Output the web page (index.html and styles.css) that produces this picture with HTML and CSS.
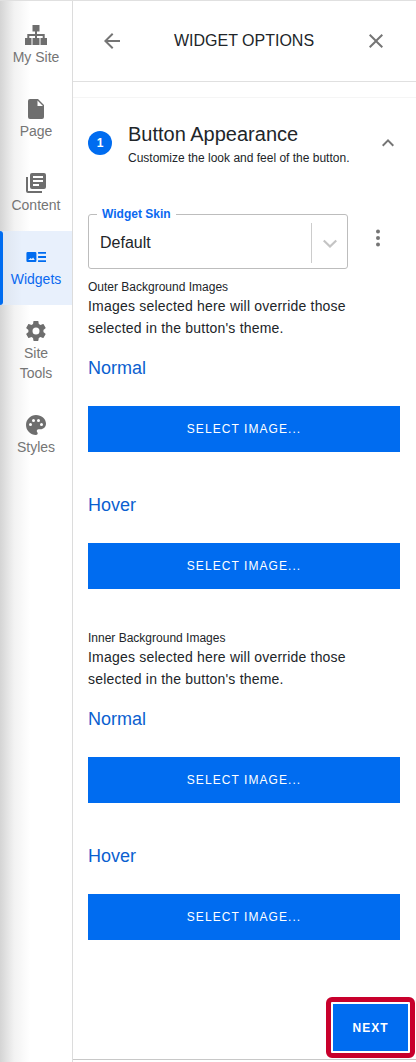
FILE: index.html
```html
<!DOCTYPE html>
<html lang="en">
<head>
<meta charset="utf-8">
<title>Widget Options</title>
<link rel="stylesheet" href="styles.css">
</head>
<body>
<div class="app">
  <nav class="rail">
    <div class="rail-item">
      <svg class="rail-icon" viewBox="0 0 24 24"><path d="M8.500 2h7v6.500H13V11h7.700v4H23v7h-6.500v-7h2.200v-2H13v2h2.500v7h-7v-7H11v-2H5.300v2h2.200v7H1v-7h2.300v-4H11V8.500H8.500z"/></svg>
      <span>My Site</span>
    </div>
    <div class="rail-item">
      <svg class="rail-icon" viewBox="0 0 24 24"><path d="M6 2h8l6 6v12a2 2 0 0 1-2 2H6a2 2 0 0 1-2-2V4a2 2 0 0 1 2-2zm7.500 1.500V9h5.500z"/></svg>
      <span>Page</span>
    </div>
    <div class="rail-item">
      <svg class="rail-icon" viewBox="0 0 24 24"><path d="M4 6H2v14a2 2 0 0 0 2 2h14v-2H4z"/><path fill-rule="evenodd" d="M8 2h12a2 2 0 0 1 2 2v12a2 2 0 0 1-2 2H8a2 2 0 0 1-2-2V4a2 2 0 0 1 2-2zm1 3v2h10V5zm0 4v2h10V9zm0 4v2h6v-2z"/></svg>
      <span>Content</span>
    </div>
    <div class="rail-item rail-active">
      <svg class="rail-icon widget-icon" viewBox="0 0 24 16"><path fill-rule="evenodd" d="M2 2h9a1.500 1.500 0 0 1 1.500 1.500v9A1.500 1.500 0 0 1 11 14H2a1.500 1.500 0 0 1-1.500-1.500v-9A1.500 1.500 0 0 1 2 2zm.5 9.500h8l-2-2.800-1.500 1.600-1.200-1.100z"/><path d="M14.500 2H24v2.200h-9.500zM14.500 6.900H24v2.200h-9.500zM14.500 11.800H24V14h-9.500z"/></svg>
      <span>Widgets</span>
    </div>
    <div class="rail-item">
      <svg class="rail-icon" viewBox="0 0 24 24"><path d="M19.400 13c.05-.3.1-.65.1-1s-.05-.7-.1-1l2.100-1.650c.2-.15.25-.4.1-.65l-2-3.450c-.1-.2-.4-.3-.6-.2l-2.500 1a7.300 7.300 0 0 0-1.700-1L14.400 2.400c-.05-.25-.25-.4-.5-.4h-4c-.25 0-.45.15-.5.400L9.050 5.050a7.600 7.600 0 0 0-1.700 1l-2.500-1c-.25-.1-.5 0-.6.2l-2 3.450c-.15.25-.1.500.1.650L4.450 11c-.05.3-.1.65-.1 1s.05.7.1 1l-2.100 1.650c-.2.15-.25.4-.1.65l2 3.450c.1.2.4.3.6.2l2.500-1c.5.4 1.100.75 1.700 1l.35 2.650c.05.25.25.4.5.4h4c.25 0 .45-.15.5-.4l.35-2.650a7.600 7.600 0 0 0 1.700-1l2.500 1c.25.1.5 0 .6-.2l2-3.450c.15-.25.1-.5-.1-.65zM12 15.500a3.500 3.500 0 1 1 0-7 3.500 3.500 0 0 1 0 7z"/></svg>
      <span>Site<br>Tools</span>
    </div>
    <div class="rail-item">
      <svg class="rail-icon" viewBox="0 0 24 24"><path fill-rule="evenodd" d="M12 2C6.500 2 2 6.500 2 12s4.500 10 10 10c1 0 1.700-.75 1.700-1.700 0-.45-.15-.85-.45-1.150-.3-.3-.45-.7-.45-1.150 0-.95.75-1.700 1.700-1.700h2c3 0 5.500-2.500 5.500-5.500C22 5.900 17.500 2 12 2zM6.500 13a1.500 1.500 0 1 1 0-3 1.500 1.500 0 0 1 0 3zm3-4a1.500 1.500 0 1 1 0-3 1.500 1.500 0 0 1 0 3zm5 0a1.500 1.500 0 1 1 0-3 1.500 1.500 0 0 1 0 3zm3 4a1.500 1.500 0 1 1 0-3 1.500 1.500 0 0 1 0 3z"/></svg>
      <span>Styles</span>
    </div>
  </nav>
  <main class="panel">
    <header class="panel-head">
      <svg class="head-icon" viewBox="0 0 24 24"><path d="M20 11H7.800l5.600-5.600L12 4l-8 8 8 8 1.400-1.400L7.800 13H20z"/></svg>
      <h1>WIDGET OPTIONS</h1>
      <svg class="head-icon" viewBox="0 0 24 24"><path d="M19 6.400 17.600 5 12 10.600 6.400 5 5 6.400 10.600 12 5 17.600 6.400 19 12 13.400 17.600 19 19 17.600 13.400 12z"/></svg>
    </header>
    <div class="head-rule"></div>
    <section class="step">
      <div class="step-head">
        <span class="step-num">1</span>
        <div class="step-title">
          <h2>Button Appearance</h2>
          <p>Customize the look and feel of the button.</p>
        </div>
        <svg class="step-chev" viewBox="0 0 24 24"><path d="M12 8l-6 6 1.400 1.400L12 10.800l4.600 4.600L18 14z"/></svg>
      </div>
      <div class="skin-row">
        <fieldset class="skin">
          <legend>Widget Skin</legend>
          <span class="skin-value">Default</span>
          <span class="skin-sep"></span>
          <svg class="skin-chev" viewBox="0 0 20 20"><path d="M4.500 6.800 10 12.100l5.500-5.300 1.500 1.500-7 6.700-7-6.700z"/></svg>
        </fieldset>
        <svg class="more" viewBox="0 0 24 24"><circle cx="12" cy="5.500" r="2"/><circle cx="12" cy="12" r="2"/><circle cx="12" cy="18.500" r="2"/></svg>
      </div>
      <h3 class="group-label">Outer Background Images</h3>
      <p class="group-help">Images selected here will override those selected in the button's theme.</p>
      <h4 class="state first">Normal</h4>
      <button class="select">SELECT IMAGE...</button>
      <h4 class="state">Hover</h4>
      <button class="select">SELECT IMAGE...</button>
      <h3 class="group-label second">Inner Background Images</h3>
      <p class="group-help">Images selected here will override those selected in the button's theme.</p>
      <h4 class="state first">Normal</h4>
      <button class="select">SELECT IMAGE...</button>
      <h4 class="state">Hover</h4>
      <button class="select">SELECT IMAGE...</button>
    </section>
    <div class="foot">
      <div class="next-ring"><button class="next">NEXT</button></div>
    </div>
  </main>
</div>
</body>
</html>
```
FILE: styles.css
```css
* { box-sizing: border-box; }
html, body { margin: 0; padding: 0; }
body {
  width: 416px;
  height: 1062px;
  overflow: hidden;
  background: #fff;
  font-family: "Liberation Sans", Arial, sans-serif;
  color: #212529;
}
.app { display: flex; height: 1062px; border-top: 1px solid #e0e0e0; }
.rail {
  width: 73px;
  flex: none;
  padding-top: 8px;
  border-right: 1px solid #dcdcdc;
  background: linear-gradient(to right, #d4d4d4 0, #f2f2f2 14px, #fff 30px);
}
.rail-item {
  display: flex;
  flex-direction: column;
  align-items: center;
  padding-top: 14px;
  padding-bottom: 16px;
  min-height: 74px;
  font-size: 14px;
  line-height: 20px;
  color: #757575;
  text-align: center;
}
.rail-icon { width: 24px; height: 24px; fill: #6e6e6e; display: block; }
.rail-active {
  background: linear-gradient(to right, #dde4ee, #e8f0fc 22px);
  color: #0b69f0;
  position: relative;
}
.rail-active::before {
  content: "";
  position: absolute;
  left: 0; top: 0; bottom: 0;
  width: 3px;
  background: #006cf0;
  border-radius: 0 3px 3px 0;
}
.widget-icon { fill: #006cf0; width: 20px; height: 14px; margin: 5px 0; }
.panel { flex: 1; min-width: 0; display: flex; flex-direction: column; }
.panel-head {
  height: 81px;
  flex: none;
  display: flex;
  align-items: center;
  justify-content: space-between;
  padding: 0 28px 1px 27px;
  border-bottom: 1px solid #e0e0e0;
}
.head-icon { width: 24px; height: 24px; fill: #757575; flex: none; }
.panel-head h1 { margin: 0; font-size: 16px; font-weight: 400; color: #212529; }
.head-rule { height: 16px; border-bottom: 1px solid #f5f5f5; flex: none; }
.step { flex: 1; padding: 0 16px 0 15px; }
.step-head { display: flex; align-items: flex-start; padding-top: 24px; height: 110px; }
.step-num {
  width: 24px; height: 24px;
  border-radius: 50%;
  background: #006cf0;
  color: #fff;
  font-size: 12px;
  font-weight: 700;
  display: flex;
  align-items: center;
  justify-content: center;
  margin-top: 9px;
  flex: none;
}
.step-title { margin-left: 16px; flex: 1; }
.step-title h2 { margin: 0; font-size: 20px; line-height: 24px; font-weight: 400; color: #212529; }
.step-title p { margin: 3px 0 0; font-size: 12px; line-height: 18px; }
.step-chev { width: 24px; height: 24px; fill: #757575; margin-top: 9px; flex: none; }
.skin-row { display: flex; align-items: flex-start; }
.skin {
  width: 260px;
  height: 61px;
  margin: 0;
  padding: 0 0 0 11px;
  border: 1px solid #bdbdbd;
  border-radius: 3px;
  display: flex;
  align-items: center;
  min-width: 0;
}
.skin legend {
  padding: 0 5px;
  margin-left: -3px;
  font-size: 12px;
  line-height: 12px;
  font-weight: 700;
  color: #0b69f0;
}
.skin-value { font-size: 16px; line-height: 24px; flex: 1; margin-top: -2px; }
.skin-sep { width: 1px; height: 40px; background: #ccc; margin-top: -2px; }
.skin-chev { width: 20px; height: 20px; fill: #c4c4c4; margin: -2px 7px 0 8px; }
.more { width: 24px; height: 24px; fill: #757575; margin: 18px 0 0 18px; flex: none; }
.group-label { margin: 10px 0 0; font-size: 12px; line-height: 16px; font-weight: 400; color: #212529; }
.group-label.second { margin-top: 41px; }
.group-help { margin: 0; font-size: 14px; line-height: 22px; letter-spacing: .2px; color: #212529; }
.state { margin: 42px 0 0; font-size: 18px; line-height: 22px; font-weight: 400; color: #0b5fd0; }
.state.first { margin-top: 18px; }
.select {
  display: block;
  width: 312px;
  height: 46px;
  margin: 27px 0 0;
  border: 0;
  background: #006cf0;
  color: #fff;
  font-family: inherit;
  font-size: 12px;
  font-weight: 400;
  letter-spacing: 1.07px;
}
.foot {
  flex: none;
  height: 65px;
  margin-bottom: 2px;
  display: flex;
  justify-content: flex-end;
  padding-right: 1px;
  border-bottom: 1px solid #c8c8c8;
}
.next-ring {
  height: 61px;
  width: 89px;
  padding: 2px;
  margin-top: 2px;
  border: 5px solid #c8002c;
  border-radius: 6px;
  background: #fff;
}
.next {
  display: block;
  width: 100%;
  height: 100%;
  border: 0;
  background: #006cf0;
  color: #fff;
  font-family: inherit;
  font-size: 12px;
  font-weight: 700;
  letter-spacing: 1px;
}
```
